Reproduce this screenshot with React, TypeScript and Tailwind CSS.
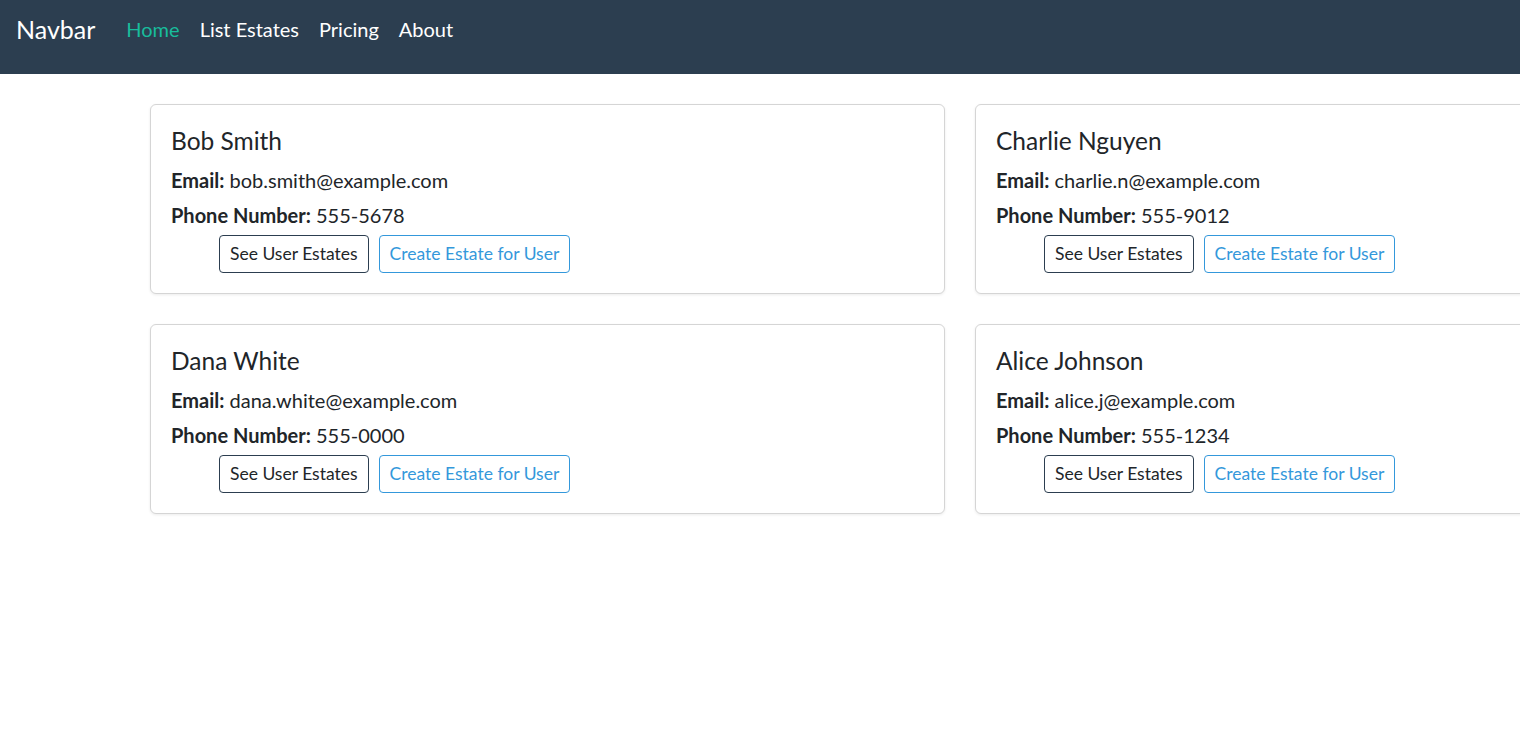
const users = [
  { name: 'Bob Smith', email: 'bob.smith@example.com', phone: '555-5678' },
  { name: 'Charlie Nguyen', email: 'charlie.n@example.com', phone: '555-9012' },
  { name: 'Dana White', email: 'dana.white@example.com', phone: '555-0000' },
  { name: 'Alice Johnson', email: 'alice.j@example.com', phone: '555-1234' },
];

function UserCard({ user }: { user: (typeof users)[number] }) {
  return (
    <div className="w-[795px] shrink-0 rounded-[6px] border border-[#d5d5d5] bg-white pt-[21px] pb-[20px] pl-[20px] shadow-[0_1px_3px_rgba(0,0,0,0.08)]">
      <h5 className="h-[30px] text-[24.5px] leading-[30px] text-[#212529]">{user.name}</h5>
      <p className="mt-[9px] h-[30px] text-[20px] leading-[30px] text-[#212529]">
        <span className="font-bold">Email:</span> {user.email}
      </p>
      <p className="mt-[5px] h-[30px] text-[20px] leading-[30px] text-[#212529]">
        <span className="font-bold">Phone Number:</span> {user.phone}
      </p>
      <div className="mt-[5px] flex gap-[10px] pl-[48px]">
        <button className="h-[38px] rounded-[4px] border border-[#2c3e50] px-[10px] text-[17.5px] text-[#212529]">
          See User Estates
        </button>
        <button className="h-[38px] rounded-[4px] border border-[#3498db] px-[10px] text-[17.5px] text-[#3498db]">
          Create Estate for User
        </button>
      </div>
    </div>
  );
}

export default function App() {
  return (
    <div className="min-h-screen w-full overflow-hidden bg-white font-['Lato','Liberation_Sans',sans-serif]">
      <nav className="flex h-[74px] items-start bg-[#2c3e50] pt-[13px] pl-[16px]">
        <span className="mr-[21px] text-[25px] leading-[32px] text-white">Navbar</span>
        <div className="flex gap-[20px] pl-[10px] text-[20px] leading-[32px]">
          <a className="text-[#18bc9c]">Home</a>
          <a className="text-white">List Estates</a>
          <a className="text-white">Pricing</a>
          <a className="text-white">About</a>
        </div>
      </nav>
      <main className="flex flex-col gap-[30px] pt-[30px] pl-[150px]">
        <div className="flex gap-[30px]">
          <UserCard user={users[0]} />
          <UserCard user={users[1]} />
        </div>
        <div className="flex gap-[30px]">
          <UserCard user={users[2]} />
          <UserCard user={users[3]} />
        </div>
      </main>
    </div>
  );
}
